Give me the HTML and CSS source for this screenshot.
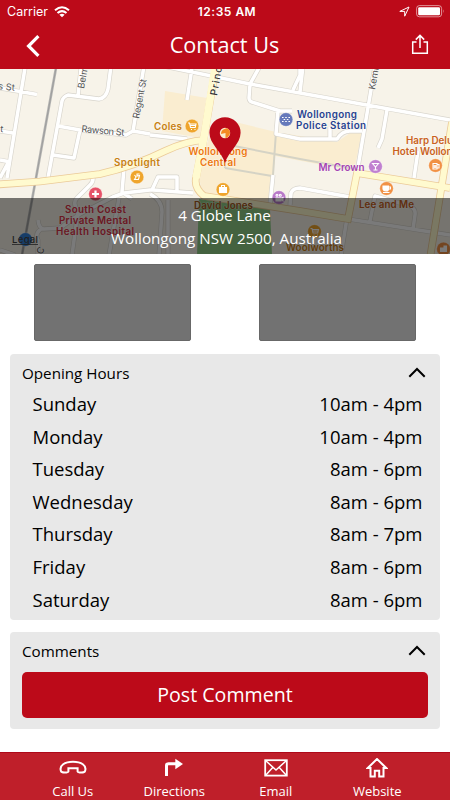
FILE: index.html
```html
<!DOCTYPE html>
<html lang="en">
<head>
<meta charset="utf-8">
<title>Contact Us</title>
<link rel="stylesheet" href="styles.css">
</head>
<body>
<div class="app">
  <header class="header">
    <div class="status">
      <div class="status-left"><span>Carrier</span>
        <svg class="wifi" width="16" height="12" viewBox="0 0 16 12" fill="none" stroke="#fff" stroke-width="2"><path d="M1 4.3Q8-1.8 15 4.3M3.5 7Q8 3.2 12.5 7"/><path d="M8 11.3L5.4 8.7Q8 6.6 10.6 8.7Z" fill="#fff" stroke="none"/></svg>
      </div>
      <div class="status-time">12:35 AM</div>
      <div class="status-right">
        <svg width="11" height="11" viewBox="0 0 11 11" fill="none" stroke="#fff"><path d="M.8 5.4L10 1L5.7 10.2V5.4Z"/></svg>
        <svg width="29" height="13" viewBox="0 0 29 13"><rect x=".6" y=".6" width="25" height="11.2" rx="2.8" fill="none" stroke="#fff" stroke-opacity=".55"/><rect x="2.2" y="2.2" width="21.8" height="8" rx="1.2" fill="#fff"/><path d="M27 4.2Q28.4 6.2 27 8.2Z" fill="#fff" opacity=".6"/></svg>
      </div>
    </div>
    <div class="navbar">
      <svg class="back" width="14" height="22" viewBox="0 0 14 22" fill="none" stroke="#fff" stroke-width="3.2"><path d="M12.4 1.2L2.6 11L12.4 20.8"/></svg>
      <h1>Contact Us</h1>
      <svg class="share" width="18" height="21" viewBox="0 0 18 21" fill="none" stroke="#fff" stroke-width="1.5"><path d="M5.5 8H1.7V19.3H16.3V8H12.5M9 14V1.5M4.8 5.6L9 1.4L13.2 5.6"/></svg>
    </div>
  </header>

  <section class="map">
    <svg class="map-art" width="450" height="185" viewBox="0 69 450 185">
      <rect y="69" width="450" height="185" fill="#f7f3e9"/>
      <g fill="#faedd0">
        <path d="M165 91L207 98L200 138L162 131Z"/>
        <path d="M235 122L276 132L337 142L350 133L362 132L354 171L275 156L271 207L202 195L198 168L212 130Z"/>
      </g>
      <path d="M199 199L270 209L272 255H197Z" fill="#8fce87"/>
      <g fill="none" stroke="#d5d3c5" stroke-width="2">
        <path d="M276 132L273 175M225 168L272 176M225 168V162M229 145L300 159L355 169"/>
      </g>
      <path d="M56 68L22 255" stroke="#b4b4b2" stroke-width="2.6"/>
      <path d="M56 68L22 255" stroke="#989898" stroke-width=".8"/>
      <defs>
        <path id="streets" d="M25 68L7 178M0 88L37 94.500M0 131L13 133M0 160L8 161.500M0 178L8 163M82 60L78 96M111 66L108 89Q106 98 99 99L68 95Q63 97 62 101L48 178M58 126L80 130L126 135L133 131L150 134M80 130L74 158L53 155M144 66L133 131M92 175Q95 181 89 186L77 198Q72 203 78 211L72 255M38 220Q39 229 44 229L60 228L80 214L113 197L124 193L150 190L153 190L193 193M124 168L122 192L132 199M119 198L109 255M42 228Q34 234 38 240V255M0 250L15 255M163 66L250 84L249 98Q249 102 255 103L280 111H292M260 66L250 84M300 66L300 75L293 90M192 68L187 100M278 111L276 134L300 139L337 139Q342 131 350 131L362 131M330 127V138M303 66L300 92M250 84L300 93L450 120M375 66L357 173M387 110L382 139L378 148M418 151L414 178M150 135L187 139M152 190L158 177H177V192M150 194Q162 200 162 212L159 255M168 200V255M273 175L270 205M290 205L291 193Q293 188 300 188L350 197M348 219L450 235M347 218L341 255M370 221L375 196L410 206Q416 209 415 215L413 229"/>
        <path id="avenues" d="M-2 184.500L40 181.500L100 174Q135 166 165 151Q186 141 205 140"/>
        <path id="avenues-right" d="M216 66L204 137L196 178Q194 188 204 196L300 211L348 219L357 173L450 188M452 122L430 258"/>
      </defs>
      <use href="#streets" class="road-edge"/>
      <use href="#streets" class="road"/>
      <use href="#avenues" class="avenue-edge"/>
      <use href="#avenues-right" class="avenue-edge"/>
      <use href="#avenues" class="avenue"/>
      <use href="#avenues-right" class="avenue"/>
      <path d="M215 68L204 137L196 178" stroke="#fffacf" stroke-width="7.500" fill="none"/>
      <g class="street-name">
        <text x="-2" y="89.500" transform="rotate(5 0 90)">s St</text>
        <text x="0" y="132" transform="rotate(5 0 132)">t</text>
        <text x="81.500" y="132" textLength="43" transform="rotate(5 81 130)">Rawson St</text>
        <text transform="translate(84 89) rotate(-80)" textLength="22">Belm</text>
        <text transform="translate(139 119) rotate(-79)" textLength="40">Regent St</text>
        <text class="major" transform="translate(217 96) rotate(-80)" textLength="29">Princ</text>
        <text transform="translate(375 90) rotate(-80)">Kemb</text>
        <text transform="translate(42 255) rotate(-65)">C</text>
      </g>
      <g class="poi">
        <g fill="#c78011"><text x="154" y="130" textLength="28">Coles</text><text x="114" y="166" textLength="46">Spotlight</text></g>
        <g fill="#ed7710"><text x="188.500" y="155" textLength="59">Wollongong</text><text x="200" y="166" textLength="36">Central</text></g>
        <text x="194" y="209" textLength="59" fill="#a55b20">David Jones</text>
        <g fill="#27428f"><text x="297" y="118" textLength="60">Wollongong</text><text x="296" y="129" textLength="70">Police Station</text></g>
        <text x="318.500" y="170.500" textLength="46" fill="#a443b2">Mr Crown</text>
        <g fill="#c96120"><text x="406" y="143.500">Harp Delu</text><text x="392.500" y="154.500">Hotel Wollon</text><text x="359" y="207.500" textLength="55">Lee and Me</text></g>
        <g fill="#df3448"><text x="65" y="213" textLength="61">South Coast</text><text x="59" y="223.500" textLength="72">Private Mental</text><text x="56" y="234.500" textLength="78">Health Hospital</text></g>
        <text x="286" y="250.500" textLength="58" fill="#ce8014">Woolworths</text>
      </g>
      <g stroke="#fff" stroke-opacity=".6" stroke-width=".5">
        <circle cx="192" cy="126" r="6.800" fill="#efa52c"/><circle cx="137" cy="177" r="6.800" fill="#efa52c"/><circle cx="223" cy="189.500" r="6.800" fill="#efa52c"/><circle cx="314.500" cy="231.500" r="6.800" fill="#efa52c"/>
        <circle cx="286" cy="119.500" r="6.800" fill="#6579bb"/><circle cx="279" cy="197.500" r="6.800" fill="#b879c8"/><circle cx="375.500" cy="166.500" r="6.800" fill="#c080d0"/>
        <circle cx="435.500" cy="165.500" r="6.800" fill="#f19145"/><circle cx="386.500" cy="188.500" r="6.800" fill="#f19145"/><circle cx="443.500" cy="249" r="6.800" fill="#f19145"/>
        <circle cx="95.500" cy="194" r="6.800" fill="#e65268"/><circle cx="25.500" cy="239.500" r="6.800" fill="#317fd9"/>
      </g>
      <path d="M95.500 190.500V197.500M92 194H99" stroke="#fff" stroke-width="2.200"/>
      <g fill="none" stroke="#fff" stroke-width="1.100">
        <path id="cart" d="M188 123H189.500L190.500 127.500H195.200L196 124H190M190 125.500H195.500M191 129.500H192M194.500 129.500H195.500"/>
        <use href="#cart" x="122.500" y="105.500"/>
        <path d="M134.500 175L136 177L134.500 179.500H138.500L139.500 175.500L137 176V174H139.500"/>
        <path d="M219.500 187.500H226.500V192.500H219.500Z" fill="#fff"/><path d="M221.500 187V185.500H224.500V187"/>
        <path d="M282 117.500H290M282 121.500H290" stroke-dasharray="1.600 1.600"/><path d="M283.600 119.500H290" stroke-dasharray="1.600 1.600"/>
        <path d="M372.500 163.500H378.500L375.500 167ZM375.500 167V170M373.500 170H377.500"/>
        <path d="M383 186H388.500V189Q388.500 191 386 191Q383.500 191 383 189Z" fill="#fff"/><path d="M388.500 187H390.500V189H388.500M383 192.500H389.500"/>
        <path d="M433 163.500H437V169H433ZM437 164.500H439V168H437M434.300 165V168M435.700 165V168"/>
        <path d="M440.500 248H443V251.500H440.500ZM444 246H446.500V251.500H444Z" fill="#fff"/>
        <path d="M276 198H281V201H276ZM281 199L283 197.500V201Z" fill="#fff"/><circle cx="277" cy="195.300" r="1"/><circle cx="280.300" cy="195.300" r="1"/>
      </g>
      <text x="12" y="243" textLength="26" class="legal">Legal</text><path d="M12 244.500H38" stroke="#444" stroke-width=".8"/>
    </svg>
    <svg class="pin" width="32" height="47" viewBox="0 0 32 47"><path d="M16 46C13 35 .4 27 .4 15.800A15.600 15.600 0 0 1 31.600 15.800C31.600 27 19 35 16 46Z" fill="#bc0a19"/><circle cx="16" cy="16" r="5.200" fill="#faedd0"/><path d="M15.500 12Q19 9.500 21 14.500Q21.500 18 18 20.800L16.500 21V16L12 17Q12 13 15.500 12Z" fill="#f48b23"/></svg>
    <div class="address"><div class="street">4 Globe Lane</div><div class="city">Wollongong NSW 2500, Australia</div></div>
  </section>

  <main class="content">
    <div class="tiles"><div class="tile"></div><div class="tile"></div></div>
    <section class="card hours">
      <div class="card-head"><h2>Opening Hours</h2><svg width="18" height="11" viewBox="0 0 18 11" fill="none" stroke="#000" stroke-width="2"><path d="M1.300 9.800L9 2L16.700 9.800"/></svg></div>
      <dl>
        <div><dt>Sunday</dt><dd>10am - 4pm</dd></div>
        <div><dt>Monday</dt><dd>10am - 4pm</dd></div>
        <div><dt>Tuesday</dt><dd>8am - 6pm</dd></div>
        <div><dt>Wednesday</dt><dd>8am - 6pm</dd></div>
        <div><dt>Thursday</dt><dd>8am - 7pm</dd></div>
        <div><dt>Friday</dt><dd>8am - 6pm</dd></div>
        <div><dt>Saturday</dt><dd>8am - 6pm</dd></div>
      </dl>
    </section>
    <section class="card comments">
      <div class="card-head"><h2>Comments</h2><svg width="18" height="11" viewBox="0 0 18 11" fill="none" stroke="#000" stroke-width="2"><path d="M1.300 9.800L9 2L16.700 9.800"/></svg></div>
      <button class="post">Post Comment</button>
    </section>
  </main>

  <nav class="tabs">
    <a><svg width="28" height="20" viewBox="0 0 28 20" fill="none" stroke="#fff" stroke-width="2"><path d="M2 13.200C-.2 7.500 6 3.700 14 3.700S28.200 7.500 26 13.200C25.300 15.200 19 14.800 18.600 13.500V10.200H9.400V13.500C9 14.800 2.700 15.200 2 13.200Z"/></svg><span>Call Us</span></a>
    <a><svg width="20" height="20" viewBox="0 0 20 20"><path d="M2.500 18V7.500Q2.500 5.800 4.500 5.800H13" fill="none" stroke="#fff" stroke-width="3"/><path d="M11.300 .8L19 6L11.300 11.200Z" fill="#fff"/></svg><span>Directions</span></a>
    <a><svg width="24" height="20" viewBox="0 0 24 20" fill="none" stroke="#fff"><rect x="1.200" y="2.200" width="21.600" height="15.400" stroke-width="1.800"/><path d="M1.500 2.500L12 12L22.500 2.500M1.500 17.500L8.700 9.500M22.500 17.500L15.300 9.500" stroke-width="1.500"/></svg><span>Email</span></a>
    <a><svg width="22" height="20" viewBox="0 0 22 20" fill="none" stroke="#fff" stroke-width="2"><path d="M4.500 10H1.800L11 1L20.200 10H17.500V18.600H13.200V12.800H8.800V18.600H4.500Z"/></svg><span>Website</span></a>
  </nav>
</div>
</body>
</html>
```
FILE: styles.css
```css
* { box-sizing: border-box; }
body { margin: 0; background: #fff; font-family: "Open Sans", "Noto Sans", sans-serif; color: #000; }
h1, h2, dl, dd { margin: 0; font-weight: 400; }
svg { display: block; flex: none; }
.app { width: 450px; height: 800px; display: flex; flex-direction: column; overflow: hidden; }

.header { height: 69px; flex: none; background: #bc0a19; color: #fff; }
.status { height: 22px; display: grid; grid-template-columns: 1fr auto 1fr; align-items: center; padding: 1px 5px 0 7px; font: 12.5px Inter, sans-serif; }
.status-left, .status-right { display: flex; align-items: center; }
.status-left { gap: 6px; }
.status-right { justify-content: flex-end; gap: 6px; }
.status-time { font-weight: 600; font-size: 12px; letter-spacing: .5px; padding-left: 2px; }
.navbar { height: 45px; display: grid; grid-template-columns: 40px 1fr 40px; align-items: center; padding: 0 21px 0 26px; }
.back { position: relative; top: 1px; }
.share { justify-self: end; }
.navbar h1 { font-size: 21.7px; line-height: 28px; text-align: center; padding-right: 6px; }

.map { position: relative; height: 185px; flex: none; }
.road-edge { fill: none; stroke: #d8d5cd; stroke-width: 4.8; stroke-linejoin: round; }
.road { fill: none; stroke: #fff; stroke-width: 3.5; stroke-linejoin: round; }
.avenue-edge { fill: none; stroke: #ebca98; stroke-width: 7.6; }
.avenue { fill: none; stroke: #fffacf; stroke-width: 6; }
.street-name { font: 9.3px Inter, sans-serif; fill: #555; stroke: #fff; stroke-opacity: .6; stroke-width: 1px; paint-order: stroke; }
.street-name .major { fill: #333; font-size: 10px; font-weight: 500; }
.poi { font: 600 9.8px Inter, sans-serif; stroke: #fff; stroke-opacity: .5; stroke-width: 1px; paint-order: stroke; }
.legal { font: 500 9.5px Inter, sans-serif; fill: #444; }
.pin { position: absolute; left: 209px; top: 48px; }
.address { position: absolute; left: 0; right: 0; bottom: 0; height: 56px; background: rgba(0, 0, 0, .52); color: #fff; text-align: center; font-size: 15.2px; line-height: 23px; padding: 6px 0 0; }
.street { padding-right: 1px; }
.city { padding-left: 3px; }

.content { flex: 1; padding: 10px 10px 0; }
.tiles { display: flex; justify-content: space-between; padding: 0 24px; }
.tile { width: 157px; height: 77px; background: #727272; border: 1px solid #686868; border-radius: 2px; }
.card { background: #e8e8e8; border-radius: 4px; }
.hours { margin-top: 13px; height: 266px; }
.comments { margin-top: 12px; height: 97px; padding-bottom: 12px; }
.card-head { height: 34px; display: flex; align-items: center; justify-content: space-between; padding: 3px 14px 0 12px; }
.card-head h2 { font-size: 15.2px; line-height: 20px; }
.hours dl { padding: 0 17.5px 0 22.5px; }
.hours dl div { display: flex; justify-content: space-between; height: 32.55px; align-items: center; font-size: 18.5px; line-height: 26px; }
.post { display: block; width: 406px; height: 46px; margin: 6px auto 0; border: 0; border-radius: 5px; background: #bc0a19; color: #fff; font: 19.6px/26px "Open Sans", sans-serif; }

.tabs { height: 48px; flex: none; display: grid; grid-template-columns: repeat(4, 101.5px); justify-content: center; background: #bf1f2a; border-top: 1px solid #ae0819; }
.tabs a { display: flex; flex-direction: column; align-items: center; padding-top: 5px; color: #fff; font-size: 13px; line-height: 18px; gap: 4px; }
```
